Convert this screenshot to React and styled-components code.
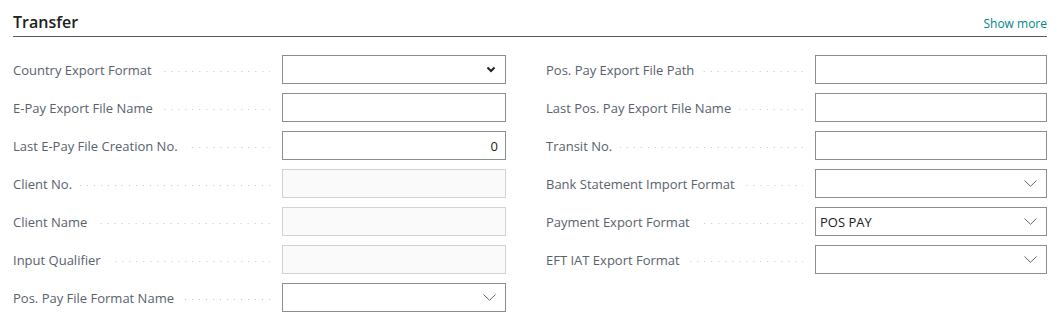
import React from 'react';
import styled, { createGlobalStyle } from 'styled-components';

const GlobalStyle = createGlobalStyle`
  body {
    margin: 0;
    background: #ffffff;
    font-family: "Segoe UI", "Open Sans", "Noto Sans", sans-serif;
  }
`;

const Page = styled.div`
  width: 1057px;
  height: 322px;
  box-sizing: border-box;
  padding: 10px 10px 0 13px;
`;

const Header = styled.div`
  display: flex;
  align-items: flex-end;
  justify-content: space-between;
  height: 26px;
  border-bottom: 1px solid #505c6d;
`;

const Title = styled.h2`
  margin: 0 0 3px 0;
  font-size: 16px;
  font-weight: 600;
  color: #212121;
  line-height: 22px;
`;

const ShowMore = styled.a`
  margin-bottom: 4px;
  font-size: 12px;
  color: #008489;
  text-decoration: none;
  line-height: 16px;
`;

const Columns = styled.div`
  display: grid;
  grid-template-columns: 493px 501px;
  column-gap: 40px;
  padding-top: 18px;
`;

const Column = styled.div`
  display: flex;
  flex-direction: column;
  gap: 9px;
`;

const Row = styled.div`
  display: flex;
  align-items: center;
  height: 29px;
`;

const Label = styled.div`
  width: 269px;
  flex: none;
  display: flex;
  align-items: center;
  gap: 8px;
  padding-right: 12px;
  box-sizing: border-box;
  font-size: 13px;
  color: #59626d;
  white-space: nowrap;
`;

const Dots = styled.span`
  flex: 1;
  height: 1px;
  margin-top: 3px;
  background-image: linear-gradient(to left, #c4c4c4 1px, transparent 1px);
  background-size: 7px 1px;
  background-position: right center;
  background-repeat: repeat-x;
`;

const Field = styled.div`
  flex: 1;
  height: 29px;
  box-sizing: border-box;
  display: flex;
  align-items: center;
  justify-content: ${(p) => (p.$numeric ? 'flex-end' : 'space-between')};
  padding: 0 ${(p) => (p.$numeric ? '7px' : '10px')} 0 4px;
  border: 1px solid ${(p) => (p.$disabled ? '#d2d2d2' : '#8a8d91')};
  background: ${(p) => (p.$disabled ? '#fafafa' : '#ffffff')};
  font-size: 13px;
  color: #212121;
`;

const Chevron = ({ bold }) =>
  bold ? (
    <svg width="10" height="7" viewBox="0 0 10 7" style={{ marginLeft: 'auto', marginRight: '-1px' }}>
      <path d="M1.5 1.5 L5 5 L8.5 1.5" fill="none" stroke="#222" strokeWidth="2" />
    </svg>
  ) : (
    <svg width="13" height="7" viewBox="0 0 13 7" style={{ marginLeft: 'auto', marginRight: '-1px' }}>
      <path d="M0.5 0.5 L6.5 6.3 L12.5 0.5" fill="none" stroke="#666" strokeWidth="1" />
    </svg>
  );

const left = [
  { label: 'Country Export Format', kind: 'nativeSelect' },
  { label: 'E-Pay Export File Name' },
  { label: 'Last E-Pay File Creation No.', value: '0', numeric: true },
  { label: 'Client No.', disabled: true },
  { label: 'Client Name', disabled: true },
  { label: 'Input Qualifier', disabled: true },
  { label: 'Pos. Pay File Format Name', kind: 'select' },
];

const right = [
  { label: 'Pos. Pay Export File Path' },
  { label: 'Last Pos. Pay Export File Name' },
  { label: 'Transit No.' },
  { label: 'Bank Statement Import Format', kind: 'select' },
  { label: 'Payment Export Format', kind: 'select', value: 'POS PAY' },
  { label: 'EFT IAT Export Format', kind: 'select' },
];

const FieldRow = ({ item }) => (
  <Row>
    <Label>
      {item.label}
      <Dots />
    </Label>
    <Field $disabled={item.disabled} $numeric={item.numeric}>
      {item.value && <span>{item.value}</span>}
      {item.kind === 'nativeSelect' && <Chevron bold />}
      {item.kind === 'select' && <Chevron />}
    </Field>
  </Row>
);

export default function App() {
  return (
    <Page>
      <GlobalStyle />
      <Header>
        <Title>Transfer</Title>
        <ShowMore>Show more</ShowMore>
      </Header>
      <Columns>
        <Column>
          {left.map((item) => (
            <FieldRow key={item.label} item={item} />
          ))}
        </Column>
        <Column>
          {right.map((item) => (
            <FieldRow key={item.label} item={item} />
          ))}
        </Column>
      </Columns>
    </Page>
  );
}
